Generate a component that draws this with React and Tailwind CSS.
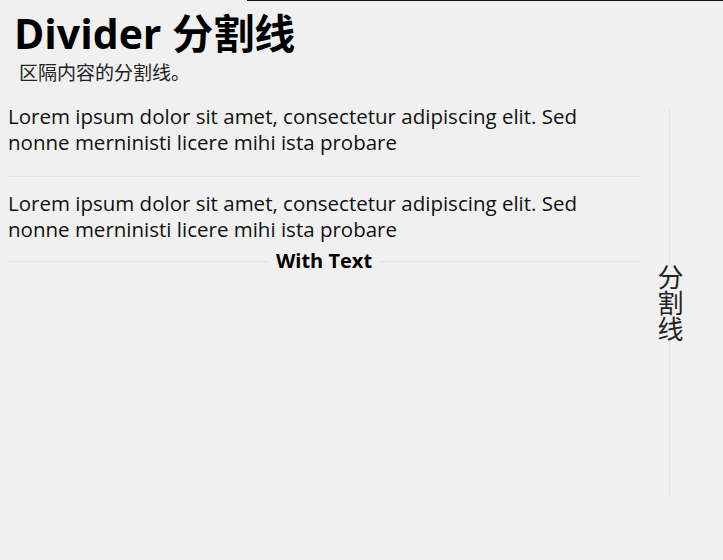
export default function App() {
  const font = { fontFamily: '"Open Sans", "Noto Sans CJK SC", sans-serif' };
  return (
    <div className="w-[723px] h-[560px] bg-[#f0f0f0] text-black overflow-hidden" style={font}>
      <div className="ml-[247px] h-px bg-[#111]" />
      <h1 className="ml-[14px] mt-[8px] text-[41px] leading-[48px] font-bold">Divider 分割线</h1>
      <p className="ml-[19px] mt-[4px] text-[19px] leading-[24px] text-[#222]">区隔内容的分割线。</p>
      <div className="flex mt-[18px] pl-[8px]">
        <div className="w-[632px]">
          <p className="max-w-[590px] text-[20.5px] leading-[26px] text-[#111]">
            Lorem ipsum dolor sit amet, consectetur adipiscing elit. Sed nonne merninisti licere mihi ista probare
          </p>
          <div className="mt-[21px] mb-[13px] h-px bg-[#e2e2e2]" />
          <p className="max-w-[590px] text-[20.5px] leading-[26px] text-[#111]">
            Lorem ipsum dolor sit amet, consectetur adipiscing elit. Sed nonne merninisti licere mihi ista probare
          </p>
          <div className="flex items-center gap-[8px] mt-[6px]">
            <div className="flex-1 h-px bg-[#e2e2e2]" />
            <span className="text-[20px] leading-[26px] font-bold">With Text</span>
            <div className="flex-1 h-px bg-[#e2e2e2]" />
          </div>
        </div>
        <div className="w-[58px] mt-[6px] flex flex-col items-center h-[387px]">
          <div className="w-px flex-1 bg-[#e2e2e2]" />
          <span className="my-[9px] text-[26px] leading-[26px] [writing-mode:vertical-rl] text-[#222]">分割线</span>
          <div className="w-px flex-1 bg-[#e2e2e2]" />
        </div>
      </div>
    </div>
  );
}
